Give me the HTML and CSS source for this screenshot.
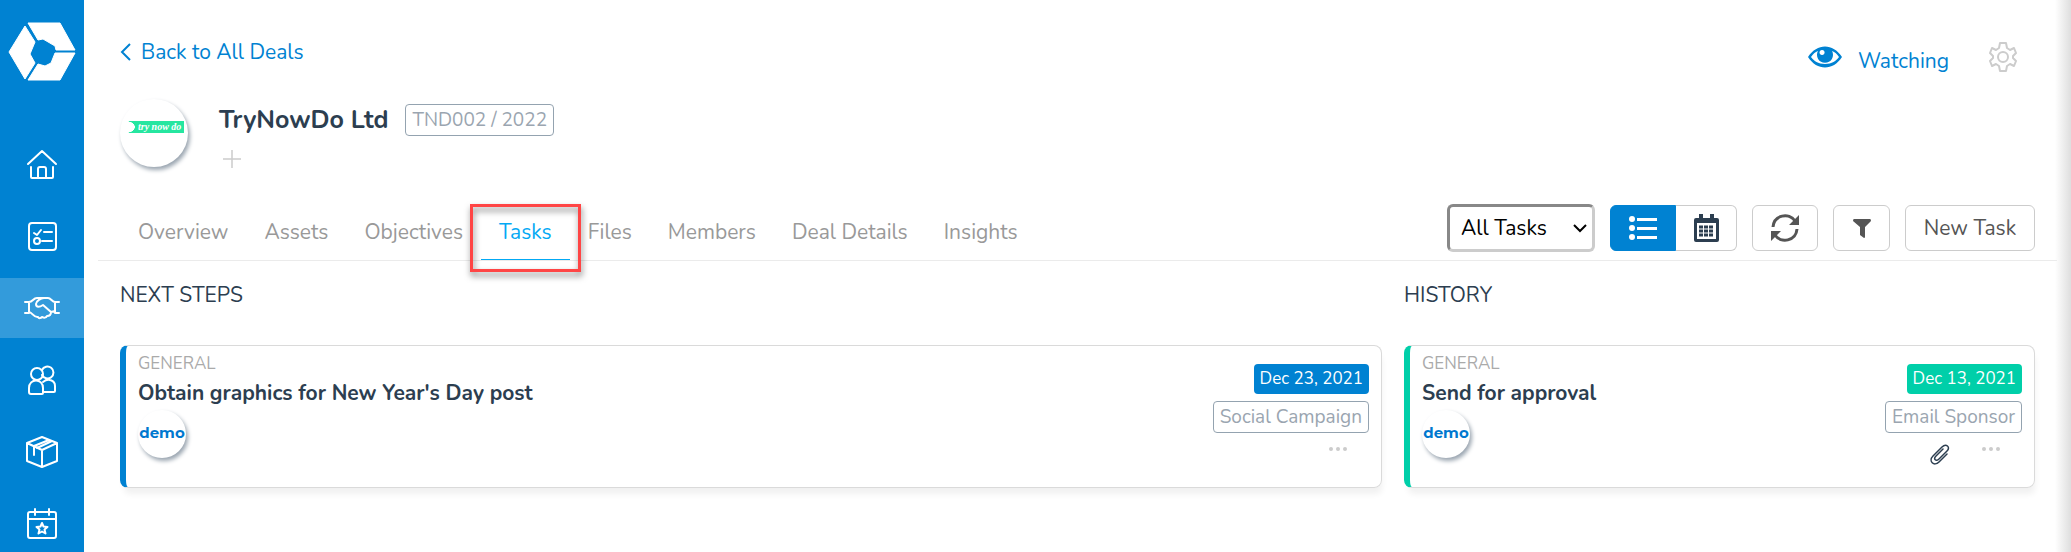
FILE: index.html
```html
<!DOCTYPE html>
<html lang="en">
<head>
  <meta charset="UTF-8">
  <meta name="viewport" content="width=device-width, initial-scale=1.0">
  <title>TryNowDo Ltd - Tasks</title>

  <link rel="stylesheet" href="styles.css">
</head>
<body>
  <nav class="sidebar" aria-label="Main">
    <a class="logo" href="#" aria-label="Dashboard">
      <svg width="68" height="60" viewBox="0 0 68 60">
        <path fill="#fff" stroke="#fff" stroke-linejoin="round" d="M20 1h32l15 27H48l-1-4-12-7-5 1zM17 4l10 16-5 12 5 9-10 16L1 30zM47 31h20L52 58H20l10-16 7 2 6-3z"/>
      </svg>
    </a>
    <a class="side-link" href="#" aria-label="Home">
      <svg class="line-icon" width="32" height="32" viewBox="0 0 32 32"><path d="M2 16 16 3l14 13M5 19v10q0 1 1 1h20q1 0 1-1V19M12 30V21q0-2 2-2h4q2 0 2 2v9"/></svg>
    </a>
    <a class="side-link" href="#" aria-label="Tasks">
      <svg class="line-icon" width="31" height="31" viewBox="0 0 31 31"><rect x="2" y="2" width="27" height="27" rx="3"/><path d="m7 12 3 2 4-5M17 11h8M15 20h10"/><circle cx="10" cy="20" r="3"/></svg>
    </a>
    <a class="side-link active" href="#" aria-label="Deals">
      <svg class="line-icon" width="36" height="24" viewBox="0 0 36 24"><path d="M1 6h4v11H1M35 6h-4v11h4M5 6c4 0 4-4 8-4h11c3 0 4 4 7 4M20 2c-3 0-8 3-8 6 0 4 4 3 7 1l8 7M5 16c3 0 5 6 9 5 1 2 3 1 4 0 2 1 4 1 5-1 2 0 4-1 4-4l4-1"/></svg>
    </a>
    <a class="side-link" href="#" aria-label="Contacts">
      <svg class="line-icon" width="32" height="32" viewBox="0 0 32 32"><circle cx="11" cy="10" r="6"/><path d="M16 6a6 6 0 1 1 0 5M5 30q-2 0-2-2v-4c0-10 14-10 14 0v5q0 1-1 1zM18 28h10q1 0 1-1v-5c0-6-7-8-12-4"/></svg>
    </a>
    <a class="side-link" href="#" aria-label="Products">
      <svg class="line-icon" width="34" height="34" viewBox="0 0 34 34"><path d="M17 2 32 8v18l-15 6-15-6V8zM2 8l15 7 15-7M17 15v17M24 5 9 11v9M27 6l-15 7"/></svg>
    </a>
    <a class="side-link" href="#" aria-label="Events">
      <svg class="line-icon" width="32" height="32" viewBox="0 0 32 32"><rect x="2" y="4" width="28" height="26" rx="2"/><path d="M2 11h28M9 1v6M23 1v6M16 15l1.500 3.500 4 .5-3 2.500 1 4-3.500-2-3.500 2 1-4-3-2.500 4-.5z"/></svg>
    </a>
  </nav>

  <main class="content">
    <header class="page-header">
      <a class="back-link" href="#">
        <svg width="12" height="20" viewBox="0 0 12 20"><path d="M10 2 2 10l8 8" fill="none" stroke="currentColor" stroke-width="2"/></svg>
        Back to All Deals
      </a>
      <div class="header-actions">
        <button class="watch-btn" type="button">
          <svg width="34" height="22" viewBox="0 0 34 22"><path fill="currentColor" fill-rule="evenodd" d="M0 11C9-3 25-3 34 11 25 25 9 25 0 11zm3 0c3 4 7 7 14 7s11-3 14-7c-2-3-4-5-7-6a8 8 0 1 1-14 0c-3 1-5 3-7 6zM14 4a2.500 2.500 0 1 0 .1 0z"/></svg>
          <span>Watching</span>
        </button>
        <button class="gear-btn" type="button" aria-label="Settings">
          <svg width="28" height="30" viewBox="0 0 28 30"><path d="M11 1h6l1 5 3 2 4-2 2 5-3 3v2l3 3-2 5-4-2-3 2-1 5h-6l-1-5-3-2-4 2-2-5 3-3v-2l-3-3 2-5 4 2 3-2z"/><circle cx="14" cy="15" r="5"/></svg>
        </button>
      </div>
    </header>

    <section class="company">
      <div class="company-logo"><span>try now do</span></div>
      <div>
        <div class="company-name">
          <h1>TryNowDo Ltd</h1>
          <span class="badge">TND002 / 2022</span>
        </div>
        <button class="add-btn" type="button" aria-label="Add tag">
          <svg width="18" height="18" viewBox="0 0 18 18"><path d="M9 0v18M0 9h18" stroke="#ccc" stroke-width="1.500"/></svg>
        </button>
      </div>
    </section>

    <div class="tab-bar">
      <nav class="tabs" aria-label="Deal">
        <a href="#">Overview</a>
        <a href="#">Assets</a>
        <a href="#">Objectives</a>
        <a class="active" href="#">Tasks</a>
        <a href="#">Files</a>
        <a href="#">Members</a>
        <a href="#">Deal Details</a>
        <a href="#">Insights</a>
      </nav>
      <div class="toolbar">
        <div class="select-wrap">
          <select aria-label="Task filter">
            <option>All Tasks</option>
            <option>My Tasks</option>
          </select>
          <svg width="14" height="9" viewBox="0 0 14 9"><path d="m1 1 6 6 6-6" fill="none" stroke="#000" stroke-width="2"/></svg>
        </div>
        <div class="btn-group">
          <button class="btn btn-primary" type="button" aria-label="List view">
            <svg width="28" height="24" viewBox="0 0 28 24" fill="#fff"><circle cx="3" cy="3" r="3"/><circle cx="3" cy="12" r="3"/><circle cx="3" cy="21" r="3"/><path d="M8 2h20v3H8zM8 11h20v3H8zM8 20h20v3H8z"/></svg>
          </button>
          <button class="btn btn-calendar" type="button" aria-label="Calendar view">
            <svg width="25" height="28" viewBox="0 0 25 28"><path fill="#2c3e50" fill-rule="evenodd" d="M5 0h4v4h7V0h4v4h3q2 0 2 2v20q0 2-2 2H2q-2 0-2-2V6q0-2 2-2h3zM3 9v16h19V9z"/><path stroke="#2c3e50" stroke-width="3" stroke-dasharray="4 1" d="M5 13h14M5 17h14M5 21h14"/></svg>
          </button>
        </div>
        <button class="btn btn-refresh" type="button" aria-label="Refresh">
          <svg width="28" height="28" viewBox="0 0 28 28"><path d="M2 13C3 1 18-2 24 7M26 15C25 27 10 30 4 21" fill="none" stroke="#555" stroke-width="3"/><path fill="#555" d="M28 1v10H18zM0 27V17h10z"/></svg>
        </button>
        <button class="btn btn-filter" type="button" aria-label="Filter">
          <svg width="18" height="19" viewBox="0 0 18 19"><path fill="#555" d="M1 0h16q1 0 1 2l-6 6v10q0 1-1 1l-4-3V8L0 2q0-2 1-2z"/></svg>
        </button>
        <button class="btn btn-new" type="button">New Task</button>
      </div>
    </div>

    <div class="columns">
      <section>
        <h2>NEXT STEPS</h2>
        <article class="card">
          <div>
            <p class="card-type">GENERAL</p>
            <h3>Obtain graphics for New Year's Day post</h3>
            <div class="avatar">demo</div>
          </div>
          <div class="card-meta">
            <span class="date">Dec 23, 2021</span>
            <span class="badge">Social Campaign</span>
            <div class="card-actions">
              <button class="more-btn" type="button" aria-label="More">
                <svg width="18" height="4" viewBox="0 0 18 4" fill="#ccc"><circle cx="2" cy="2" r="2"/><circle cx="9" cy="2" r="2"/><circle cx="16" cy="2" r="2"/></svg>
              </button>
            </div>
          </div>
        </article>
      </section>

      <section>
        <h2>HISTORY</h2>
        <article class="card card-done">
          <div>
            <p class="card-type">GENERAL</p>
            <h3>Send for approval</h3>
            <div class="avatar">demo</div>
          </div>
          <div class="card-meta">
            <span class="date">Dec 13, 2021</span>
            <span class="badge">Email Sponsor</span>
            <div class="card-actions">
              <button class="clip-btn" type="button" aria-label="Attachments">
                <svg width="20" height="22" viewBox="0 0 20 22"><path d="m13 5-7 7c-3 3 0 6 3 3l8-8c4-4-1-8-5-4l-9 9c-5 5 1 11 6 6l8-8" fill="none" stroke="#2c3e50" stroke-width="1.500" stroke-linecap="round"/></svg>
              </button>
              <button class="more-btn" type="button" aria-label="More">
                <svg width="18" height="4" viewBox="0 0 18 4" fill="#ccc"><circle cx="2" cy="2" r="2"/><circle cx="9" cy="2" r="2"/><circle cx="16" cy="2" r="2"/></svg>
              </button>
            </div>
          </div>
        </article>
      </section>
    </div>
  </main>
</body>
</html>
```
FILE: styles.css
```css
* {
  box-sizing: border-box;
}
body {
  display: flex;
  margin: 0;
  min-height: 100vh;
  background: #fff;
  color: #2c3e50;
  font-family: Nunito, Lato, sans-serif;
  font-size: 21px;
  line-height: 30px;
}
h1, h2, h3, p {
  margin: 0;
}
a {
  text-decoration: none;
}
button, select {
  font: inherit;
  cursor: pointer;
}
button {
  padding: 0;
  border: none;
  background: none;
}
svg {
  display: block;
  flex: none;
}

/* Sidebar */
.sidebar {
  display: flex;
  flex-direction: column;
  flex: none;
  gap: 12px;
  width: 84px;
  height: 100vh;
  overflow: hidden;
  background: #0082d2;
}
.logo {
  display: flex;
  flex: none;
  justify-content: center;
  height: 122px;
  padding-top: 22px;
}
.side-link {
  display: flex;
  flex: none;
  align-items: center;
  justify-content: center;
  height: 60px;
}
.side-link.active {
  background: #339bdb;
}
.line-icon {
  fill: none;
  stroke: #fff;
  stroke-width: 2;
  stroke-linejoin: round;
  stroke-linecap: round;
}

/* Header */
.content {
  flex: 1;
  min-width: 0;
  padding: 37px 14px 0;
  background: linear-gradient(to left, #dedede, #fff 16px);
}
.page-header {
  display: flex;
  justify-content: space-between;
  height: 62px;
  padding: 0 22px;
}
.back-link {
  display: flex;
  align-items: center;
  gap: 9px;
  height: 30px;
  color: #0082d2;
}
.header-actions {
  display: flex;
  align-items: flex-start;
  gap: 40px;
  padding-right: 18px;
}
.watch-btn {
  display: flex;
  gap: 16px;
  padding-top: 9px;
  color: #0082d2;
}
.gear-btn {
  padding-top: 5px;
}
.gear-btn svg {
  fill: none;
  stroke: #ccc;
  stroke-width: 2;
  stroke-linejoin: round;
}
.company {
  display: flex;
  gap: 31px;
  padding: 0 22px;
}
.company-logo {
  display: flex;
  align-items: flex-start;
  justify-content: flex-end;
  width: 68px;
  height: 68px;
  padding: 22px 4px 0 0;
  border-radius: 50%;
  box-shadow: 2px 3px 4px #9aa5b0;
}
.company-logo span {
  width: 58px;
  padding-left: 12px;
  background: radial-gradient(ellipse 9px 6px at 0 6px, #fff 95%, #26e6a0);
  color: #fff;
  font: italic bold 10px/12px "Liberation Serif", serif;
  white-space: nowrap;
}
.company-name {
  display: flex;
  gap: 17px;
  padding-top: 5px;
}
h1 {
  font-size: 25px;
  line-height: 32px;
}
.badge {
  padding: 0 6px;
  border: 1px solid #94a3b0;
  border-radius: 4px;
  color: #9aa5b0;
  font-size: 19px;
  line-height: 30px;
}
.add-btn {
  display: block;
  padding: 14px 4px 0;
}

/* Tabs and toolbar */
.tab-bar {
  display: flex;
  justify-content: space-between;
  height: 93px;
  padding: 0 22px;
  border-bottom: 1px solid #ebebeb;
}
.tabs {
  display: flex;
  align-self: flex-end;
}
.tabs a {
  position: relative;
  height: 43px;
  padding: 0 18px;
  border-bottom: 1px solid transparent;
  color: #999;
}
.tabs .active {
  border-color: #03a9f4;
  color: #03a9f4;
}
/* highlight frame over the current tab */
.tabs .active::after {
  content: "";
  position: absolute;
  inset: -13px -11px -13px;
  border: 3px solid #ff4545;
  filter: drop-shadow(1px 4px 3px rgba(0, 0, 0, 0.5));
}
.toolbar {
  display: flex;
  align-items: center;
  gap: 15px;
  height: 46px;
  margin-top: 37px;
}
.select-wrap {
  position: relative;
}
.select-wrap svg {
  position: absolute;
  right: 8px;
  top: 20px;
  pointer-events: none;
}
select {
  appearance: none;
  width: 148px;
  height: 48px;
  padding: 0 11px;
  border: 3px solid;
  border-color: #888 #ccc #ccc #888;
  border-radius: 6px;
  background: #fff;
  color: #000;
}
.btn {
  display: flex;
  align-items: center;
  justify-content: center;
  height: 46px;
  border: 1px solid #ccc;
  border-radius: 6px;
  background: #fff;
  color: #555;
}
.btn-group {
  display: flex;
}
.btn-primary {
  width: 66px;
  border-color: #0082d2;
  border-radius: 6px 0 0 6px;
  background: #0082d2;
}
.btn-calendar {
  width: 61px;
  border-left: none;
  border-radius: 0 6px 6px 0;
}
.btn-refresh {
  width: 66px;
}
.btn-filter {
  width: 57px;
}
.btn-new {
  width: 130px;
}

/* Task cards */
.columns {
  display: grid;
  grid-template-columns: 2fr 1fr;
  gap: 22px;
  padding: 19px 22px;
}
h2 {
  margin-bottom: 35px;
  font-size: 21px;
  font-weight: normal;
  line-height: 30px;
}
.card {
  display: flex;
  justify-content: space-between;
  min-height: 143px;
  padding: 6px 12px;
  border: 1px solid #dadada;
  border-left: 6px solid #0082d2;
  border-radius: 8px;
  box-shadow: 2px 8px 6px -2px #f1f1f1;
}
.card-done {
  border-left-color: #00cfa9;
}
.card-type {
  color: #aaa;
  font-size: 17px;
  line-height: 24px;
}
h3 {
  font-size: 21px;
  line-height: 34px;
}
.avatar {
  width: 48px;
  height: 48px;
  border-radius: 50%;
  box-shadow: 2px 3px 4px #9aa5b0;
  color: #0078cf;
  font: bold 15px/46px Montserrat, "Open Sans", sans-serif;
  text-align: center;
}
.card-meta {
  display: flex;
  flex-direction: column;
  align-items: flex-end;
  gap: 7px;
  padding-top: 12px;
}
.date {
  padding: 0 6px;
  border-radius: 4px;
  background: #0082d2;
  color: #fff;
  font-size: 17px;
  line-height: 30px;
}
.card-done .date {
  background: #00cfa9;
}
.card-actions {
  display: flex;
  align-items: flex-start;
  gap: 32px;
  padding-right: 22px;
}
.clip-btn {
  padding-top: 4px;
}
.more-btn {
  padding-top: 7px;
}
```
